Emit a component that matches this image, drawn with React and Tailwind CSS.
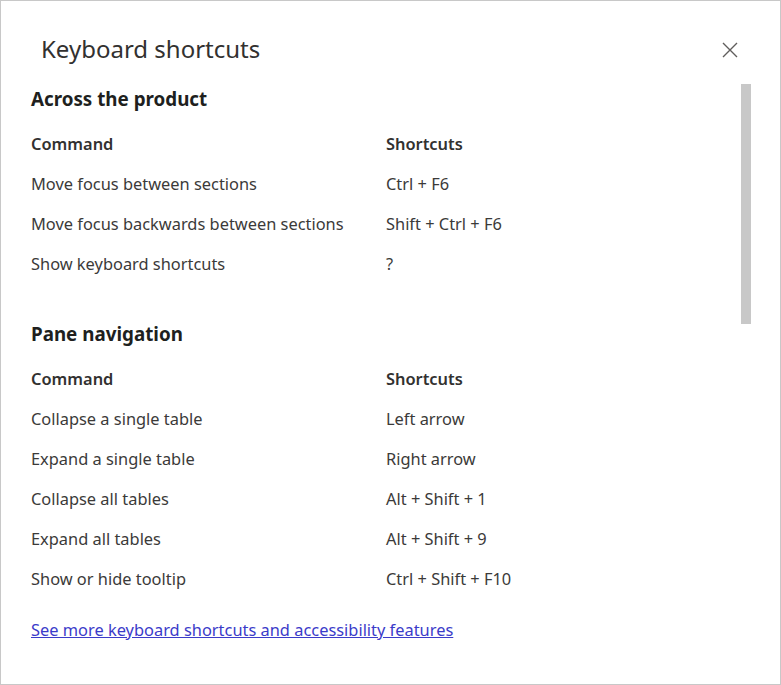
import React from "react";

const sections = [
  {
    title: "Across the product",
    rows: [
      ["Move focus between sections", "Ctrl + F6"],
      ["Move focus backwards between sections", "Shift + Ctrl + F6"],
      ["Show keyboard shortcuts", "?"],
    ],
  },
  {
    title: "Pane navigation",
    rows: [
      ["Collapse a single table", "Left arrow"],
      ["Expand a single table", "Right arrow"],
      ["Collapse all tables", "Alt + Shift + 1"],
      ["Expand all tables", "Alt + Shift + 9"],
      ["Show or hide tooltip", "Ctrl + Shift + F10"],
    ],
  },
];

function Row({ a, b, head }) {
  return (
    <div className={`flex h-[40px] items-center text-[16.4px] ${head ? "font-semibold text-[#323130]" : "text-[#3b3a39]"}`}>
      <div className="w-[355px]">{a}</div>
      <div>{b}</div>
    </div>
  );
}

export default function App() {
  return (
    <div
      className="w-[781px] h-[685px] bg-white border border-[#c8c8c8] box-border flex flex-col overflow-hidden"
      style={{ fontFamily: '"Noto Sans", "Open Sans", sans-serif' }}
    >
      <div className="h-[79px] pt-[29px] flex items-start justify-between pl-[40px] pr-[42px]">
        <div className="text-[24px] leading-[38px] text-[#323130]">Keyboard shortcuts</div>
        <button className="mt-[12px] w-[16px] h-[16px] flex items-center justify-center text-[#605e5c]">
          <svg width="16" height="16" viewBox="0 0 16 16" fill="none" stroke="currentColor" strokeWidth="1.4">
            <path d="M1 1 L15 15 M15 1 L1 15" />
          </svg>
        </button>
      </div>
      <div className="flex flex-1">
        <div className="flex-1 pl-[30px]">
          {sections.map((s, i) => (
            <div key={s.title} className={i > 0 ? "mt-[31px]" : ""}>
              <div className="h-[38px] flex items-center text-[18.8px] font-bold text-[#201f1e]">{s.title}</div>
              <div className="mt-[6px]">
                <Row a="Command" b="Shortcuts" head />
                {s.rows.map(([a, b]) => (
                  <Row key={a} a={a} b={b} />
                ))}
              </div>
            </div>
          ))}
          <div className="mt-[19px] h-[24px] flex items-center">
            <a href="#" className="text-[16.4px] text-[#3b3bc9] underline">
              See more keyboard shortcuts and accessibility features
            </a>
          </div>
        </div>
        <div className="w-[10px] mr-[29px] pt-[4px]">
          <div className="h-[240px] bg-[#c8c8c8]" />
        </div>
      </div>
    </div>
  );
}
